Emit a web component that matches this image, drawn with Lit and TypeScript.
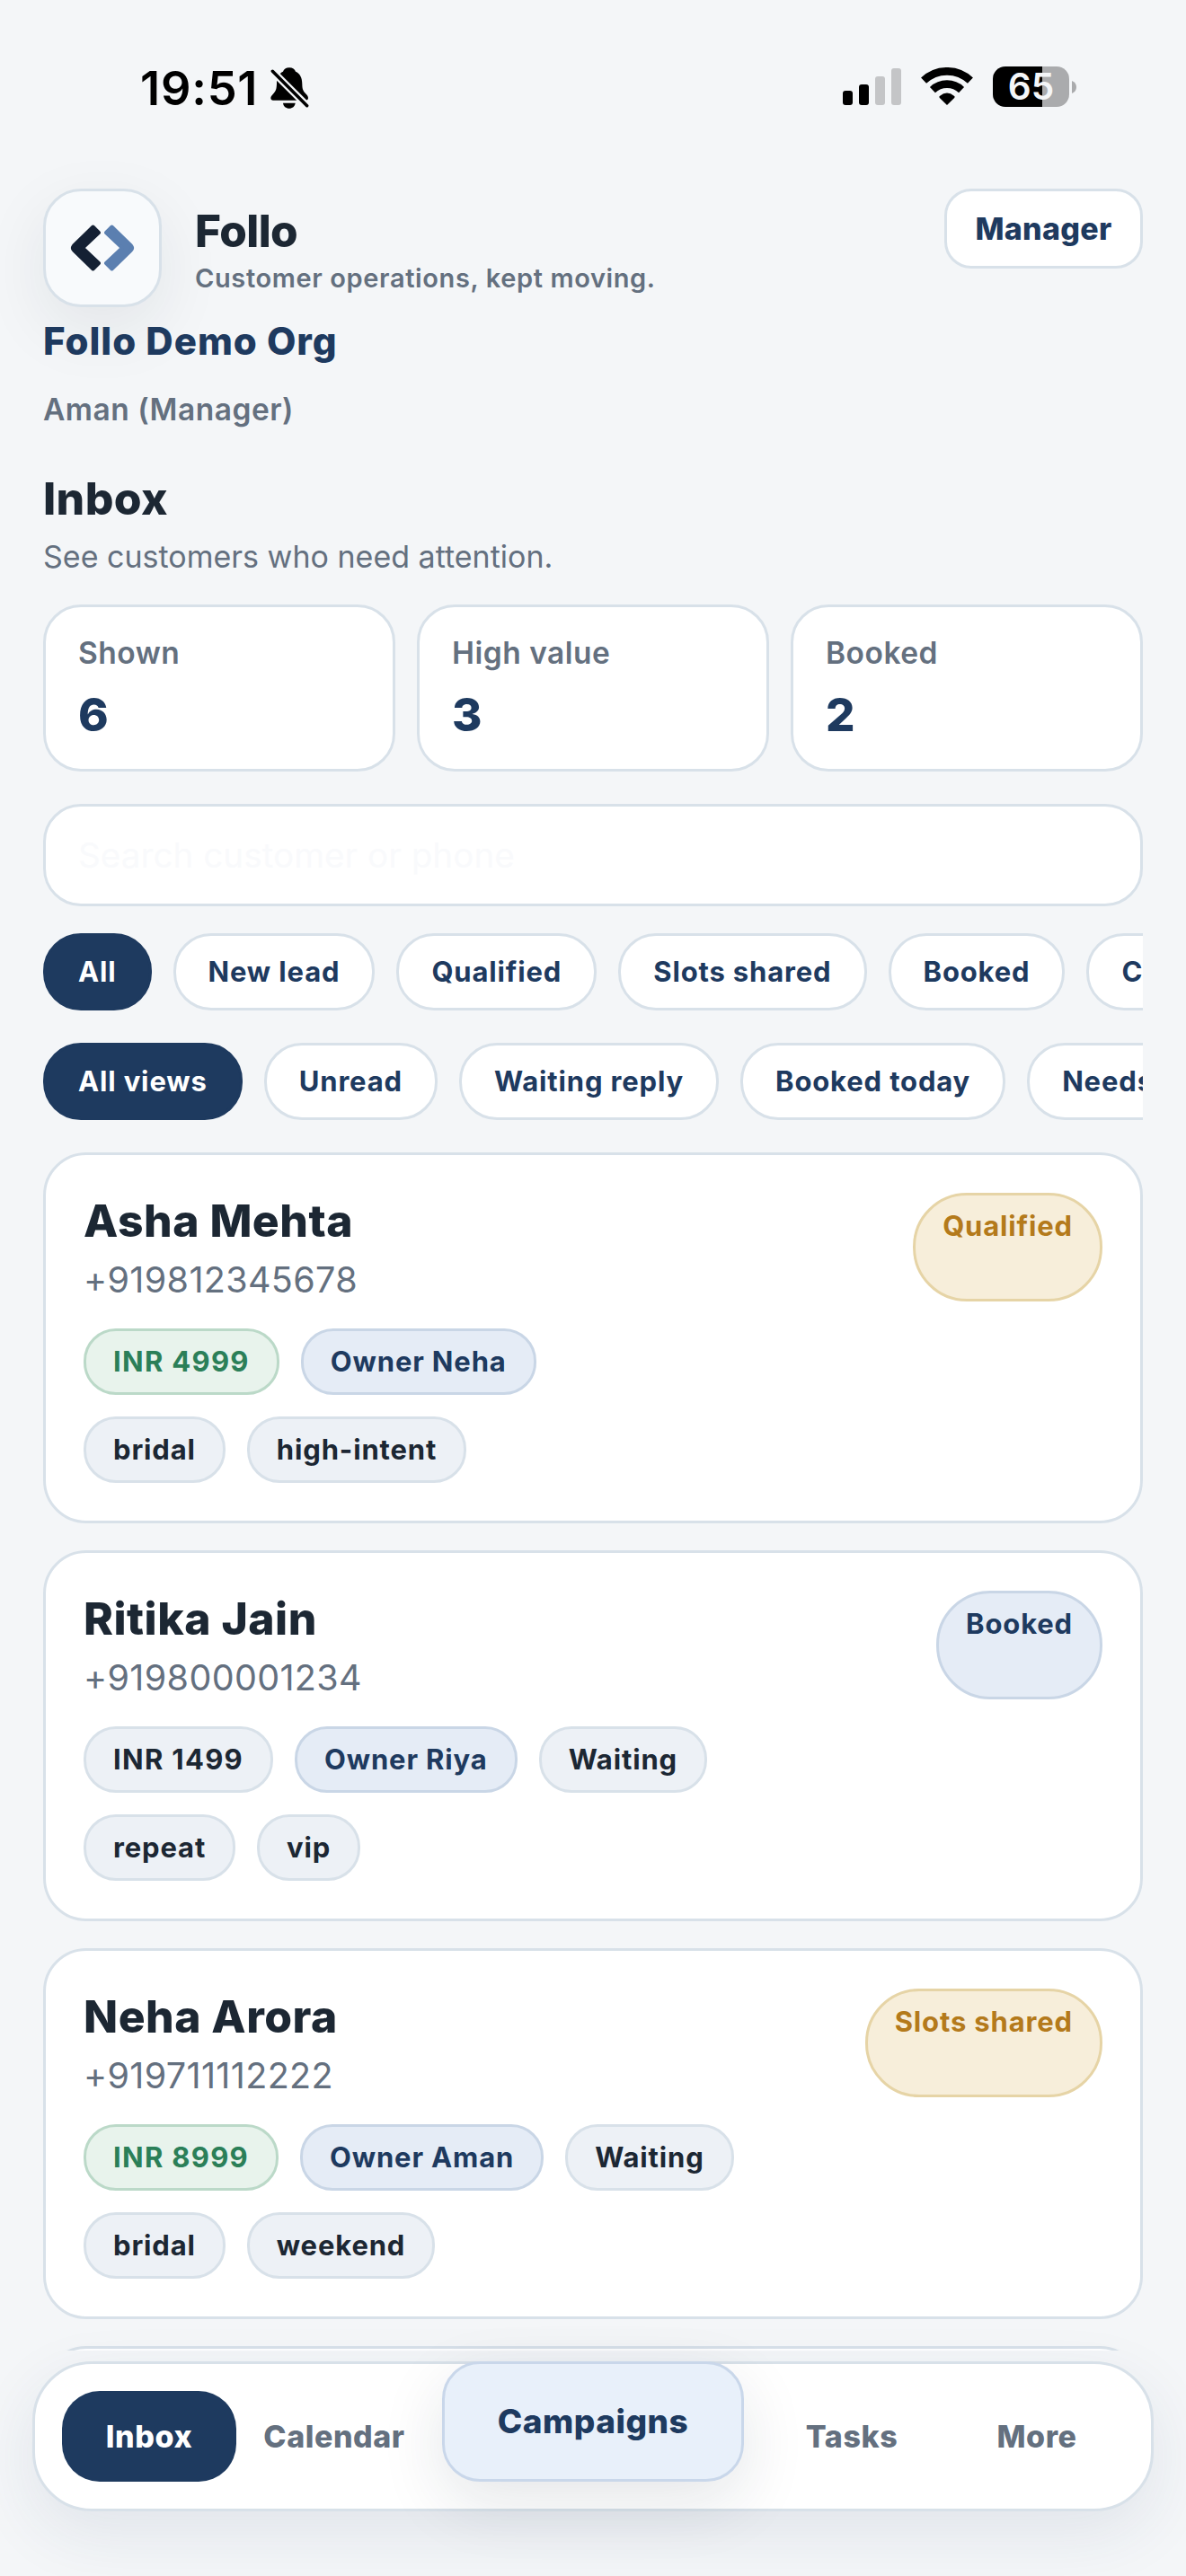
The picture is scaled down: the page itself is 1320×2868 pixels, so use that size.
import { LitElement, html, css, svg } from "lit";
import { customElement, property } from "lit/decorators.js";
import { classMap } from "lit/directives/class-map.js";

type Tone = "neutral" | "blue" | "green" | "amber";

interface Tag {
  text: string;
  tone: Tone;
}

interface Customer {
  name: string;
  phone: string;
  status: Tag;
  facts: Tag[];
  labels: string[];
}

const customers: Customer[] = [
  {
    name: "Asha Mehta",
    phone: "+919812345678",
    status: { text: "Qualified", tone: "amber" },
    facts: [
      { text: "INR 4999", tone: "green" },
      { text: "Owner Neha", tone: "blue" },
    ],
    labels: ["bridal", "high-intent"],
  },
  {
    name: "Ritika Jain",
    phone: "+919800001234",
    status: { text: "Booked", tone: "blue" },
    facts: [
      { text: "INR 1499", tone: "neutral" },
      { text: "Owner Riya", tone: "blue" },
      { text: "Waiting", tone: "neutral" },
    ],
    labels: ["repeat", "vip"],
  },
  {
    name: "Neha Arora",
    phone: "+919711112222",
    status: { text: "Slots shared", tone: "amber" },
    facts: [
      { text: "INR 8999", tone: "green" },
      { text: "Owner Aman", tone: "blue" },
      { text: "Waiting", tone: "neutral" },
    ],
    labels: ["bridal", "weekend"],
  },
];

const stats = [
  { label: "Shown", value: 6 },
  { label: "High value", value: 3 },
  { label: "Booked", value: 2 },
];

const stages = ["All", "New lead", "Qualified", "Slots shared", "Booked", "Completed"];
const views = ["All views", "Unread", "Waiting reply", "Booked today", "Needs action"];

const font = css`
  :host {
    display: block;
    box-sizing: border-box;
    font-family: Inter, "Liberation Sans", sans-serif;
  }
  * {
    box-sizing: border-box;
  }
`;

@customElement("status-bar")
export class StatusBar extends LitElement {
  static styles = [
    font,
    css`
      .bar {
        height: 210px;
        padding: 70px 122px 0 156px;
        display: flex;
        align-items: flex-start;
        justify-content: space-between;
      }
      .left,
      .right {
        display: flex;
        align-items: flex-start;
      }
      .time {
        font-size: 52.3px;
        font-weight: 600;
        line-height: 56px;
        letter-spacing: 0.8px;
        color: #000;
        width: 145px;
      }
      .bell {
        margin-top: 5px;
      }
      .signal {
        margin: 6px 22px 0 0;
      }
      .wifi {
        margin: 5px 22px 0 0;
      }
      .battery {
        margin-top: 4px;
        display: flex;
        align-items: center;
        gap: 3px;
      }
      .cell {
        width: 85px;
        height: 45px;
        border-radius: 14px;
        background: linear-gradient(90deg, #000 55px, #aaabad 55px);
        color: #f4f6f8;
        font-size: 40.5px;
        font-weight: 600;
        line-height: 45px;
        text-align: center;
      }
    `,
  ];

  render() {
    return html`
      <div class="bar">
        <div class="left">
          <span class="time">19:51</span>
          <svg class="bell" width="43" height="46" viewBox="484 44 129 138">
            <path
              d="M547 45c-11 0-19 6-21 13-13 6-21 20-21 38 0 20-3 29-13 38-5 5-7 9-7 13 0 5 3 7 8 7h108c6 0 9-3 9-8s-3-9-7-13c-10-9-13-18-13-33 0-23-8-36-22-42-2-7-10-13-21-13z"
            />
            <path d="M526 163h41c-1 11-10 18-20.500 18S527 174 526 163z" />
            <path d="M484 50L620 186" stroke="#f4f6f8" stroke-width="24" />
            <path d="M491 57L606 172" stroke="#000" stroke-width="10.500" stroke-linecap="round" />
          </svg>
        </div>
        <div class="right">
          <svg class="signal" width="65" height="41" viewBox="0 0 65 41">
            <rect x="0" y="25" width="11" height="16" rx="3" />
            <rect x="18" y="18" width="11" height="23" rx="3" />
            <rect x="36" y="9" width="11" height="32" rx="3" fill="#c4c5c7" />
            <rect x="54" y="0" width="11" height="41" rx="3" fill="#c4c5c7" />
          </svg>
          <svg class="wifi" width="58" height="42" viewBox="433.500 105 174 126">
            <g fill="none" stroke="#000" stroke-width="26">
              <path d="M442.700 149A113 113 0 0 1 598.300 149" />
              <path d="M472.300 180.200A70 70 0 0 1 568.700 180.200" />
            </g>
            <path d="M520.500 231L496 207q-4-4 1-7 23.500-19 47 0 5 3 1 7z" />
          </svg>
          <div class="battery">
            <div class="cell">65</div>
            <svg width="5" height="14" viewBox="0 0 5 14">
              <path d="M0 0Q5 2 5 7T0 14z" fill="#aaabad" />
            </svg>
          </div>
        </div>
      </div>
    `;
  }
}

@customElement("chip-row")
export class ChipRow extends LitElement {
  @property({ attribute: false }) items: string[] = [];

  static styles = [
    font,
    css`
      .row {
        display: flex;
        gap: 24px;
        overflow: hidden;
      }
      .chip {
        flex: none;
        height: 86px;
        padding: 0 36px;
        border: 3px solid #d8e1e9;
        border-radius: 42px;
        background: #fff;
        color: #1e3a5f;
        font-size: 31px;
        font-weight: 700;
        line-height: 80px;
        letter-spacing: 0.85px;
        white-space: nowrap;
      }
      .on {
        background: #1e3a5f;
        border-color: #1e3a5f;
        color: #fff;
      }
    `,
  ];

  render() {
    return html`<div class="row">
      ${this.items.map(
        (t, i) => html`<div class=${classMap({ chip: true, on: i === 0 })}>${t}</div>`
      )}
    </div>`;
  }
}

@customElement("customer-card")
export class CustomerCard extends LitElement {
  @property({ attribute: false }) customer?: Customer;

  static styles = [
    font,
    css`
      :host {
        flex: none;
      }
      .card {
        height: 413px;
        padding: 42px;
        border: 3px solid #d8e1e9;
        border-radius: 48px;
        background: #fff;
      }
      .top {
        height: 121px;
        display: flex;
        justify-content: space-between;
        align-items: stretch;
      }
      .name {
        padding-top: 1px;
        color: #1c2733;
        font-size: 49.8px;
        font-weight: 800;
        line-height: 60px;
        letter-spacing: 0.5px;
      }
      .phone {
        margin-top: 12px;
        color: #64707f;
        font-size: 39.5px;
        line-height: 48px;
        letter-spacing: 0.35px;
      }
      .tags {
        display: flex;
        gap: 24px;
        margin-top: 24px;
      }
      .facts {
        margin-top: 30px;
      }
      .tag {
        padding: 0 30px;
        border: 3px solid #d8e1e9;
        border-radius: 36px;
        background: #edf1f6;
        color: #1c2733;
        font-size: 31px;
        font-weight: 700;
        line-height: 68px;
        letter-spacing: 0.85px;
        white-space: nowrap;
      }
      .facts .tag:first-child {
        letter-spacing: 1.3px;
      }
      .badge {
        border-radius: 60px;
      }
      .blue {
        background: #e5ecf6;
        border-color: #c9d6e6;
        color: #1e3a5f;
      }
      .green {
        background: #e8f3ec;
        border-color: #bbd9c8;
        color: #2b7f58;
      }
      .amber {
        background: #f7eeda;
        border-color: #e6d4a6;
        color: #b47a1b;
      }
    `,
  ];

  render() {
    const c = this.customer;
    if (!c) return html`<div class="card"></div>`;
    return html`
      <div class="card">
        <div class="top">
          <div>
            <div class="name">${c.name}</div>
            <div class="phone">${c.phone}</div>
          </div>
          <div class="tag badge ${c.status.tone}">${c.status.text}</div>
        </div>
        <div class="tags facts">
          ${c.facts.map((t) => html`<div class="tag ${t.tone}">${t.text}</div>`)}
        </div>
        <div class="tags">${c.labels.map((t) => html`<div class="tag">${t}</div>`)}</div>
      </div>
    `;
  }
}

@customElement("bottom-nav")
export class BottomNav extends LitElement {
  static styles = [
    font,
    css`
      .nav {
        height: 167px;
        padding: 30px;
        border: 3px solid #d8e1e9;
        border-radius: 66px;
        background: #fff;
        box-shadow: 0 24px 72px rgba(30, 58, 95, 0.09);
        display: grid;
        grid-template-columns: 194px 194px 358px 194px 194px;
        gap: 12px;
      }
      .item {
        height: 101px;
        border-radius: 42px;
        color: #64707f;
        font-size: 34px;
        font-weight: 800;
        line-height: 101px;
        letter-spacing: 0.55px;
        text-align: center;
      }
      .active {
        background: #1e3a5f;
        color: #fff;
      }
      .main {
        justify-self: center;
        width: 336px;
        height: 134px;
        margin-top: -33px;
        border: 3px solid #c9d7ea;
        border-radius: 42px;
        background: #e8f0fa;
        box-shadow: 0 24px 72px rgba(20, 32, 51, 0.11);
        color: #1e3a5f;
        font-size: 37px;
        font-weight: 800;
        line-height: 128px;
        letter-spacing: 0.5px;
        text-align: center;
      }
    `,
  ];

  render() {
    return html`
      <nav class="nav">
        <div class="item active">Inbox</div>
        <div class="item">Calendar</div>
        <div class="main">Campaigns</div>
        <div class="item">Tasks</div>
        <div class="item">More</div>
      </nav>
    `;
  }
}

const chevron = svg`<path
  d="M103.500 253L82 274Q79.800 276.500 82 279L103.500 300L110 293.500L92 276.500L110 259.500Z"
  stroke-width="4"
  stroke-linejoin="round"
/>`;

@customElement("app-root")
export class AppRoot extends LitElement {
  static styles = [
    font,
    css`
      :host {
        height: 2868px;
        background: #f4f6f8;
        overflow: hidden;
      }
      .screen {
        height: 2617px;
        display: flex;
        flex-direction: column;
      }
      .body {
        flex: 1;
        min-height: 0;
        padding: 0 48px;
        display: flex;
        flex-direction: column;
      }
      .header {
        display: flex;
        align-items: flex-start;
        height: 132px;
      }
      .logo {
        width: 132px;
        height: 132px;
        border: 3px solid #d8e1e9;
        border-radius: 42px;
        background: #f8fafc;
        box-shadow: 0 24px 72px rgba(20, 32, 51, 0.08);
        display: flex;
        align-items: center;
        justify-content: center;
      }
      .dark {
        fill: #142033;
        stroke: #142033;
      }
      .light {
        fill: #5b7fb0;
        stroke: #5b7fb0;
      }
      .brand {
        flex: 1;
        padding: 17px 0 0 37px;
      }
      .title {
        color: #1c2733;
        font-size: 49.5px;
        font-weight: 800;
        line-height: 60px;
        letter-spacing: -0.6px;
      }
      .tagline {
        margin-top: 3px;
        color: #64707f;
        font-size: 29px;
        font-weight: 600;
        line-height: 40px;
        letter-spacing: 0.62px;
      }
      .role {
        width: 221px;
        height: 89px;
        border: 3px solid #d8e1e9;
        border-radius: 30px;
        background: #fff;
        color: #1e3a5f;
        font-size: 34px;
        font-weight: 800;
        line-height: 83px;
        letter-spacing: 0.3px;
        text-align: center;
      }
      .org {
        margin-top: 12px;
        color: #1e3a5f;
        font-size: 42px;
        font-weight: 800;
        line-height: 52px;
        letter-spacing: 0.97px;
        position: relative;
      }
      .user {
        margin-top: 28px;
        color: #64707f;
        font-size: 33.5px;
        font-weight: 600;
        line-height: 44px;
        letter-spacing: 0.5px;
      }
      .heading {
        margin-top: 47px;
        color: #1c2733;
        font-size: 49.8px;
        font-weight: 800;
        line-height: 60px;
        letter-spacing: 0.4px;
      }
      .hint {
        margin-top: 12px;
        color: #64707f;
        font-size: 34px;
        line-height: 46px;
      }
      .stats {
        margin-top: 30px;
        display: grid;
        grid-template-columns: repeat(3, 1fr);
        gap: 24px;
      }
      .stat {
        height: 186px;
        padding: 29px 36px 0;
        border: 3px solid #d8e1e9;
        border-radius: 42px;
        background: #fff;
      }
      .label {
        color: #64707f;
        font-size: 33.5px;
        font-weight: 600;
        line-height: 44px;
        letter-spacing: 0.5px;
      }
      .value {
        margin-top: 17px;
        color: #1e3a5f;
        font-size: 51px;
        font-weight: 800;
        line-height: 60px;
      }
      .search {
        margin-top: 36px;
        height: 114px;
        padding: 0 36px;
        border: 3px solid #d8e1e9;
        border-radius: 42px;
        background: #fff;
        color: #f9fafc;
        font-size: 38.7px;
        line-height: 108px;
      }
      .stages {
        margin-top: 30px;
      }
      .views {
        margin-top: 36px;
      }
      .list {
        flex: 1;
        min-height: 0;
        margin-top: 36px;
        overflow: hidden;
        display: flex;
        flex-direction: column;
        gap: 30px;
      }
      .dock {
        padding: 12px 36px 0;
        position: relative;
      }
    `,
  ];

  render() {
    return html`
      <div class="screen">
        <status-bar></status-bar>
        <div class="body">
          <div class="header">
            <div class="logo">
              <svg width="74" height="54" viewBox="77 249.500 74 54">
                <g class="dark">${chevron}</g>
                <g class="light" transform="translate(228 0) scale(-1 1)">${chevron}</g>
              </svg>
            </div>
            <div class="brand">
              <div class="title">Follo</div>
              <div class="tagline">Customer operations, kept moving.</div>
            </div>
            <div class="role">Manager</div>
          </div>
          <div class="org">Follo Demo Org</div>
          <div class="user">Aman (Manager)</div>
          <div class="heading">Inbox</div>
          <div class="hint">See customers who need attention.</div>
          <div class="stats">
            ${stats.map(
              (s) => html`<div class="stat">
                <div class="label">${s.label}</div>
                <div class="value">${s.value}</div>
              </div>`
            )}
          </div>
          <div class="search">Search customer or phone</div>
          <chip-row class="stages" .items=${stages}></chip-row>
          <chip-row class="views" .items=${views}></chip-row>
          <div class="list">
            ${customers.map((c) => html`<customer-card .customer=${c}></customer-card>`)}
            <customer-card></customer-card>
          </div>
        </div>
      </div>
      <div class="dock"><bottom-nav></bottom-nav></div>
    `;
  }
}
